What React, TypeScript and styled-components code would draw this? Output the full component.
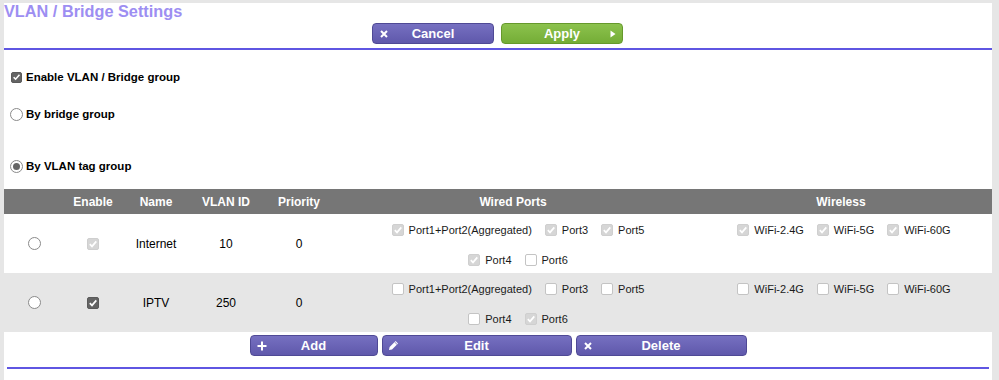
import styled, { createGlobalStyle, css } from "styled-components"

const GlobalStyle = createGlobalStyle`
  html, body {
    margin: 0;
    padding: 0;
    background: #e6e6e6;
  }
  body {
    font-family: "Liberation Sans", Arial, sans-serif;
    color: #000;
  }
`

const lineColor = "#5f56e2"

const Panel = styled.div`
    margin: 3px 7px 0 4px;
    height: 377px;
    background: #fff;
    display: flex;
    flex-direction: column;
`

const Header = styled.div`
    height: 45px;
    display: flex;
    flex-direction: column;
    border-bottom: 2px solid ${lineColor};
`

const Title = styled.h1`
    margin: 0;
    font-size: 16.3px;
    line-height: 16px;
    font-weight: bold;
    color: #9d8ef2;
`

const BtnRow = styled.div`
    display: flex;
    justify-content: center;
    gap: ${(p: { $gap: number }) => p.$gap}px;
`

const TopBtnRow = styled(BtnRow)`
    margin-top: 4px;
    padding-right: 1px;
`

const Btn = styled.button<{ $w: number; $green?: boolean }>`
    width: ${(p) => p.$w}px;
    height: 21px;
    padding: 0;
    display: grid;
    grid-template-columns: 22px 1fr 22px;
    align-items: center;
    border-radius: 4px;
    font-family: "Liberation Sans", Arial, sans-serif;
    font-size: 13px;
    font-weight: bold;
    color: #fff;
    cursor: pointer;
    ${(p) =>
        p.$green
            ? css`
                  background: linear-gradient(#8cc24d, #74ad36);
                  border: 1px solid #66992c;
              `
            : css`
                  background: linear-gradient(#7670c1, #5f58ab);
                  border: 1px solid #4f4995;
              `}
`

const BtnIcon = styled.span<{ $end?: boolean }>`
    display: flex;
    justify-content: ${(p) => (p.$end ? "flex-end" : "center")};
    padding-right: ${(p) => (p.$end ? 6 : 0)}px;
    align-items: center;
`

const BtnLabel = styled.span`
    text-align: center;
`

const Options = styled.div`
    display: flex;
    flex-direction: column;
`

const OptionRow = styled.label<{ $top: number; $box?: boolean }>`
    height: 18px;
    margin-top: ${(p) => p.$top}px;
    padding-left: ${(p) => (p.$box ? 7 : 6)}px;
    display: flex;
    align-items: center;
    gap: ${(p) => (p.$box ? 4 : 3)}px;
    font-size: 11.5px;
    font-weight: bold;
`

const Table = styled.table`
    width: 988px;
    margin-top: 14px;
    border-collapse: collapse;
    table-layout: fixed;
    font-size: 12px;
`

const HeadCell = styled.th`
    height: 25px;
    padding: 0;
    background: #767676;
    color: #fff;
    font-weight: bold;
    text-align: center;
`

const Row = styled.tr<{ $shade?: boolean }>`
    height: 59px;
    background: ${(p) => (p.$shade ? "#e6e6e6" : "#fff")};
`

const Cell = styled.td`
    padding: 0;
    text-align: center;
    vertical-align: middle;
`

const CenterBox = styled.div`
    display: flex;
    justify-content: center;
    align-items: center;
`

const PortCell = styled.td<{ $left: number }>`
    padding: 4px 0 1px ${(p) => p.$left}px;
    vertical-align: top;
`

const PortLine = styled.div`
    height: 24px;
    display: flex;
    justify-content: center;
    align-items: center;
    gap: 13px;
    & + & {
        margin-top: 6px;
    }
`

const PortItem = styled.span`
    display: flex;
    align-items: center;
    gap: 5px;
    font-size: 11px;
    color: #1a1a1a;
    white-space: nowrap;
`

const BottomRow = styled(BtnRow)`
    margin-top: 3px;
`

const Rule = styled.div`
    margin: 11px 3px 0;
    border-top: 2px solid ${lineColor};
`

type BoxState = "on" | "off" | "dim"

const Box = styled.span<{ $state: BoxState; $size: number }>`
    width: ${(p) => p.$size}px;
    height: ${(p) => p.$size}px;
    box-sizing: border-box;
    border-radius: 2px;
    flex: none;
    display: inline-flex;
    align-items: center;
    justify-content: center;
    ${(p) =>
        p.$state === "on"
            ? css`
                  background: #646464;
                  border: 1px solid #5a5a5a;
              `
            : p.$state === "dim"
            ? css`
                  background: #d6d6d6;
                  border: 1px solid #cfcfcf;
              `
            : css`
                  background: #fff;
                  border: 1px solid #c4c4c4;
              `}
`

const Circle = styled.span<{ $checked?: boolean }>`
    width: 13px;
    height: 13px;
    box-sizing: border-box;
    border-radius: 50%;
    border: 1px solid #8a8a8a;
    background: #fff;
    flex: none;
    display: inline-flex;
    align-items: center;
    justify-content: center;
    &::after {
        content: "";
        width: 7px;
        height: 7px;
        border-radius: 50%;
        background: ${(p) => (p.$checked ? "#666" : "transparent")};
    }
`

const Check = ({ state, size = 12 }: { state: BoxState; size?: number }) => (
    <Box $state={state} $size={size}>
        {state !== "off" && (
            <svg width="10" height="10" viewBox="0 0 10 10">
                <path d="M1.8 5.2 L4 7.4 L8.3 2.4" fill="none" stroke="#fff" strokeWidth="1.7" />
            </svg>
        )}
    </Box>
)

const XIcon = () => (
    <svg width="8" height="8" viewBox="0 0 8 8">
        <path d="M1 1 L7 7 M7 1 L1 7" stroke="#fff" strokeWidth="2" />
    </svg>
)

const PlayIcon = () => (
    <svg width="6" height="8" viewBox="0 0 6 8">
        <path d="M0.5 0.5 L5.5 4 L0.5 7.5 Z" fill="#fff" />
    </svg>
)

const PlusIcon = () => (
    <svg width="10" height="10" viewBox="0 0 10 10">
        <path d="M5 0.5 V9.5 M0.5 5 H9.5" stroke="#fff" strokeWidth="2" />
    </svg>
)

const PencilIcon = () => (
    <svg width="11" height="11" viewBox="0 0 11 11">
        <path d="M7.6 1 L10 3.4 L4 9.4 L1 10 L1.6 7 Z" fill="#fff" />
        <path d="M6.6 2 L9 4.4" stroke="#6a63b4" strokeWidth="0.8" />
    </svg>
)

type Port = { label: string; state: BoxState }

const vlans: {
    name: string
    id: number
    priority: number
    enable: BoxState
    wired: Port[][]
    wireless: Port[]
}[] = [
    {
        name: "Internet",
        id: 10,
        priority: 0,
        enable: "dim",
        wired: [
            [
                { label: "Port1+Port2(Aggregated)", state: "dim" },
                { label: "Port3", state: "dim" },
                { label: "Port5", state: "dim" },
            ],
            [
                { label: "Port4", state: "dim" },
                { label: "Port6", state: "off" },
            ],
        ],
        wireless: [
            { label: "WiFi-2.4G", state: "dim" },
            { label: "WiFi-5G", state: "dim" },
            { label: "WiFi-60G", state: "dim" },
        ],
    },
    {
        name: "IPTV",
        id: 250,
        priority: 0,
        enable: "on",
        wired: [
            [
                { label: "Port1+Port2(Aggregated)", state: "off" },
                { label: "Port3", state: "off" },
                { label: "Port5", state: "off" },
            ],
            [
                { label: "Port4", state: "off" },
                { label: "Port6", state: "dim" },
            ],
        ],
        wireless: [
            { label: "WiFi-2.4G", state: "off" },
            { label: "WiFi-5G", state: "off" },
            { label: "WiFi-60G", state: "off" },
        ],
    },
]

const colWidths = [60, 58, 68, 72, 74, 354, 302]
const heads = ["", "Enable", "Name", "VLAN ID", "Priority", "Wired Ports", "Wireless"]

const PortList = ({ ports }: { ports: Port[] }) => (
    <PortLine>
        {ports.map((p) => (
            <PortItem key={p.label}>
                <Check state={p.state} />
                {p.label}
            </PortItem>
        ))}
    </PortLine>
)

export default function App() {
    return (
        <>
            <GlobalStyle />
            <Panel>
                <Header>
                    <Title>VLAN / Bridge Settings</Title>
                    <TopBtnRow $gap={7}>
                        <Btn $w={122}>
                            <BtnIcon><XIcon /></BtnIcon>
                            <BtnLabel>Cancel</BtnLabel>
                            <span />
                        </Btn>
                        <Btn $w={122} $green>
                            <span />
                            <BtnLabel>Apply</BtnLabel>
                            <BtnIcon $end><PlayIcon /></BtnIcon>
                        </Btn>
                    </TopBtnRow>
                </Header>

                <Options>
                    <OptionRow $top={18} $box>
                        <Check state="on" size={11} />
                        Enable VLAN / Bridge group
                    </OptionRow>
                    <OptionRow $top={19}>
                        <Circle />
                        By bridge group
                    </OptionRow>
                    <OptionRow $top={34}>
                        <Circle $checked />
                        By VLAN tag group
                    </OptionRow>
                </Options>

                <Table>
                    <colgroup>
                        {colWidths.map((w, i) => (
                            <col key={i} style={{ width: w }} />
                        ))}
                    </colgroup>
                    <thead>
                        <tr>
                            {heads.map((h, i) => (
                                <HeadCell key={i}>{h}</HeadCell>
                            ))}
                        </tr>
                    </thead>
                    <tbody>
                        {vlans.map((v, i) => (
                            <Row key={v.name} $shade={i % 2 === 1}>
                                <Cell>
                                    <CenterBox><Circle /></CenterBox>
                                </Cell>
                                <Cell>
                                    <CenterBox><Check state={v.enable} /></CenterBox>
                                </Cell>
                                <Cell>{v.name}</Cell>
                                <Cell>{v.id}</Cell>
                                <Cell>{v.priority}</Cell>
                                <PortCell $left={10}>
                                    {v.wired.map((line, j) => (
                                        <PortList key={j} ports={line} />
                                    ))}
                                </PortCell>
                                <PortCell $left={6}>
                                    <PortList ports={v.wireless} />
                                </PortCell>
                            </Row>
                        ))}
                    </tbody>
                </Table>

                <BottomRow $gap={4}>
                    <Btn $w={128}>
                        <BtnIcon><PlusIcon /></BtnIcon>
                        <BtnLabel>Add</BtnLabel>
                        <span />
                    </Btn>
                    <Btn $w={190}>
                        <BtnIcon><PencilIcon /></BtnIcon>
                        <BtnLabel>Edit</BtnLabel>
                        <span />
                    </Btn>
                    <Btn $w={171}>
                        <BtnIcon><XIcon /></BtnIcon>
                        <BtnLabel>Delete</BtnLabel>
                        <span />
                    </Btn>
                </BottomRow>
                <Rule />
            </Panel>
        </>
    )
}
